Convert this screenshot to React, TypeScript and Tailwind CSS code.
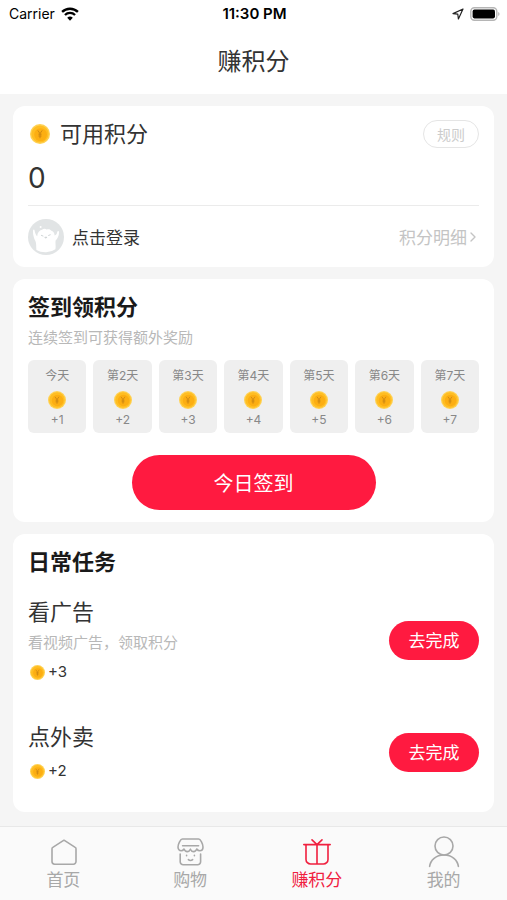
import { ChevronRight } from "lucide-react";
import type { ReactNode } from "react";

const days = [
	{ label: "今天", points: 1 },
	{ label: "第2天", points: 2 },
	{ label: "第3天", points: 3 },
	{ label: "第4天", points: 4 },
	{ label: "第5天", points: 5 },
	{ label: "第6天", points: 6 },
	{ label: "第7天", points: 7 },
];

const tasks = [
	{ title: "看广告", desc: "看视频广告，领取积分", points: 3 },
	{ title: "点外卖", desc: "", points: 2 },
];

// Chinese-only labels use the CJK font's own line metrics
const cjk = "font-['Noto_Sans_CJK_SC',sans-serif]";

const Coin = ({ className }: { className: string }) => (
	<svg viewBox="0 0 20 20" className={className} aria-hidden="true">
		<circle cx="10" cy="10" r="10" fill="#ffd152" />
		<circle cx="10" cy="10" r="8.6" fill="#ffbd22" />
		<circle cx="10.6" cy="10.6" r="6.4" fill="#fcae12" />
		<path d="M7.8 6.4 10 9.6l2.200-3.200M10 9.6v4.6M8.400 10.200h3.200M8.400 12h3.200" fill="none" stroke="#c98514" strokeWidth="0.9" />
	</svg>
);

// Status bar
const StatusBar = () => (
	<div className="grid h-7 grid-cols-3 items-center pl-[9px] pr-[7px] text-black">
		<div className="flex items-center gap-[6px] text-[14px] leading-5">
			<span>Carrier</span>
			<svg viewBox="0 0 20 15" className="h-[14px] w-[18px]" aria-hidden="true">
				<g fill="none" stroke="currentColor" strokeWidth="2.6">
					<path d="M1.2 5.2a12.6 12.6 0 0 1 17.6 0" />
					<path d="M4.4 8.6a8 8 0 0 1 11.2 0" />
				</g>
				<path d="M10 15 6.9 11.7a4.5 4.5 0 0 1 6.2 0z" fill="currentColor" />
			</svg>
		</div>
		<span className="text-center text-[15px] font-semibold leading-5">11:30 PM</span>
		<div className="flex items-center justify-end gap-[6px]">
			<svg viewBox="0 0 12 12" className="size-3" fill="none" stroke="#222" strokeWidth="1.2" strokeLinejoin="round" aria-hidden="true">
				<path d="M11 1 1 5.6l4.8.6.6 4.8z" />
			</svg>
			<svg viewBox="0 0 30 14" className="h-[14px] w-[30px]" aria-hidden="true">
				<rect x="0.8" y="0.8" width="26" height="12.4" rx="3.6" fill="#fff" stroke="#b5b5b5" strokeWidth="1.4" />
				<rect x="2.6" y="2.6" width="22.4" height="8.8" rx="1.8" fill="#000" />
				<path d="M28.2 5v4c1.8-.6 1.8-3.4 0-4z" fill="#b5b5b5" />
			</svg>
		</div>
	</div>
);

const Avatar = () => (
	<svg viewBox="0 0 36 36" className="size-9" aria-hidden="true">
		<circle cx="18" cy="18" r="18" fill="#e1e4e5" />
		<path
			d="M8.400 31C8 27 8.600 25 7.400 22 5.800 19 4.800 15.400 5 11.400c.4-1.200 1.400-1 1.600 0 .4 2.600 1.200 4.400 2.600 5.800.2-3.400 2-5.800 4.800-6.400 1.600-1.400 3.400-1.400 4.600-.2 1.800-.8 3.600-.2 4.400 1 2.200.6 3.600 2.600 3.600 5 1.600-.6 2.400-1.800 2.600-3.600.4-1.400 1.800-1.200 1.800.2.2 3.200-1.400 6.200-3.400 8.400-.4 3 .4 5.400-.2 8.600a14 10 0 0 1-19 .8z"
			fill="#fff"
		/>
		<g fill="none" stroke="#c4cacc" strokeWidth="0.8" strokeLinecap="round">
			<path d="M13.400 16.400l1.600.6M20.600 16.400l1.600-.6M17 18.600c.4.8 1.200.8 1.600 0z" />
		</g>
		<circle cx="12.600" cy="8" r="1" fill="#fff" />
	</svg>
);

const iconProps = {
	viewBox: "0 0 32 32",
	className: "size-8",
	fill: "none",
	stroke: "currentColor",
	strokeWidth: 1.6,
	strokeLinecap: "round" as const,
	strokeLinejoin: "round" as const,
	"aria-hidden": true,
};

const tabs: { label: string; active?: boolean; icon: ReactNode }[] = [
	{
		label: "首页",
		icon: (
			<svg {...iconProps}>
				<path d="M17 4.200 5.800 11.400a1.600 1.600 0 0 0-.8 1.400v12.800a2.600 2.600 0 0 0 2.600 2.600h18.800a2.600 2.600 0 0 0 2.600-2.600V12.800a1.600 1.600 0 0 0-.8-1.400z" />
			</svg>
		),
	},
	{
		label: "购物",
		icon: (
			<svg {...iconProps}>
				<path d="M8.400 3h16.200c1.800 0 4.400 4.800 4.400 8 0 2.200-1.400 3.800-3.200 3.800-1.400 0-2.400-.8-3-1.800-.6 1.600-1.800 2.600-3.200 2.600-1.400 0-2.600-1-3.200-2.400-.6 1.400-1.800 2.400-3.200 2.400-1.400 0-2.600-1-3.200-2.600-.6 1-1.400 1.800-2.800 1.800-1.800 0-3.200-1.600-3.200-3.800 0-3.200 2.600-8 4.400-8zM8.600 9.800h16M6.200 18v7.800a3 3 0 0 0 3 3h14.400a3 3 0 0 0 3-3V18" />
				<path d="M12.600 19.400v.4M20.400 19.400v.4M14.400 23.600c1.200 1.200 3 1.200 4.200 0" />
			</svg>
		),
	},
	{
		label: "赚积分",
		active: true,
		icon: (
			<svg {...iconProps}>
				<path d="M2.800 8.600h26.400M5 8.600v14.800a4.600 4.600 0 0 0 4.600 4.600h12.800a4.600 4.600 0 0 0 4.600-4.600V8.600M16 8.600V28M11 3.800l5 4.800 5-4.800" />
			</svg>
		),
	},
	{
		label: "我的",
		icon: (
			<svg {...iconProps}>
				<circle cx="16" cy="10" r="9" />
				<path d="M1.600 30.400C2.400 24 8 19 16 19s13.600 5 14.400 11.400" />
			</svg>
		),
	},
];

// Page
const App = () => {
	return (
		<div className="flex min-h-screen flex-col bg-[#f5f5f5] font-['Inter','Noto_Sans_CJK_SC',sans-serif] text-[#333]">
			<header className="bg-white pb-[18px]">
				<StatusBar />
				<h1 className={`${cjk} mt-4 text-center text-2xl leading-8`}>赚积分</h1>
			</header>

			<main className="flex flex-col gap-3 px-[13px] py-3">
				{/* Points balance */}
				<section className="rounded-xl bg-white px-[15px] pt-[14px]">
					<div className="flex items-center justify-between">
						<h2 className="flex items-center gap-[10px] pl-[2px] text-[22px] leading-7">
							<Coin className="size-5" />
							可用积分
						</h2>
						<button type="button" className="h-7 w-14 rounded-full border border-[#e5e5e5] text-[14px] text-[#ccc]">
							规则
						</button>
					</div>
					<p className="mt-3 text-[28px] leading-9">0</p>
					<div className={`${cjk} mt-[9px] flex h-[62px] items-center justify-between border-t border-[#ebebeb]`}>
						<button type="button" className="flex items-center gap-2 text-[17px]">
							<Avatar />
							点击登录
						</button>
						<a href="#detail" className="flex items-center text-[17px] text-[#c4c4c4]">
							积分明细
							<ChevronRight className="-mx-[2px] size-4" />
						</a>
					</div>
				</section>

				{/* Daily check-in */}
				<section className="rounded-xl bg-white px-[15px] pb-3 pt-[14px]">
					<h2 className="text-[22px] font-bold leading-7 text-[#1a1a1a]">签到领积分</h2>
					<p className={`${cjk} mt-[6px] text-[15px] leading-5 text-[#b8b8b8]`}>连续签到可获得额外奖励</p>
					<ul className="mt-[13px] grid grid-cols-7 gap-[7px]">
						{days.map((day) => (
							<li key={day.label} className="flex flex-col items-center rounded-md bg-[#efefef] pb-[5px] pt-2 text-[12px] leading-4 text-[#888]">
								<span>{day.label}</span>
								<Coin className="mb-[3px] mt-[7px] size-[18px]" />
								<span>+{day.points}</span>
							</li>
						))}
					</ul>
					<button type="button" className={`${cjk} mx-auto mt-[22px] block h-[55px] w-[244px] rounded-full bg-[#ff1a40] text-[20px] text-white`}>
						今日签到
					</button>
				</section>

				{/* Daily tasks */}
				<section className="rounded-xl bg-white px-[15px] pb-[31px] pt-[14px]">
					<h2 className="text-[22px] font-bold leading-7 text-[#1a1a1a]">日常任务</h2>
					<ul className="mt-[22px] flex flex-col gap-[41px]">
						{tasks.map((task) => (
							<li key={task.title} className="flex items-center justify-between">
								<div>
									<h3 className="text-[22px] leading-7">{task.title}</h3>
									{task.desc && <p className={`${cjk} mt-[6px] text-[15px] leading-5 text-[#b8b8b8]`}>{task.desc}</p>}
									<div className="mt-[10px] flex items-center gap-[3px] pl-[2px] text-[15px] leading-5">
										<Coin className="size-[15px]" />
										<span>+{task.points}</span>
									</div>
								</div>
								<button type="button" className={`${cjk} h-[39px] w-[90px] rounded-full bg-[#ff1a40] text-[17px] text-white`}>
									去完成
								</button>
							</li>
						))}
					</ul>
				</section>
			</main>

			{/* Bottom tabs */}
			<nav className="mt-auto grid grid-cols-4 border-t border-[#e8e8e8] bg-[#fafafa] pb-[10px] pt-[9px]">
				{tabs.map((tab) => (
					<a
						key={tab.label}
						href="#tab"
						aria-current={tab.active ? "page" : undefined}
						className={`flex flex-col items-center gap-[2px] text-[17px] leading-5 ${tab.active ? "text-[#f0203f]" : "text-[#a8a8a8]"}`}
					>
						{tab.icon}
						{tab.label}
					</a>
				))}
			</nav>
		</div>
	);
};

export default App;
